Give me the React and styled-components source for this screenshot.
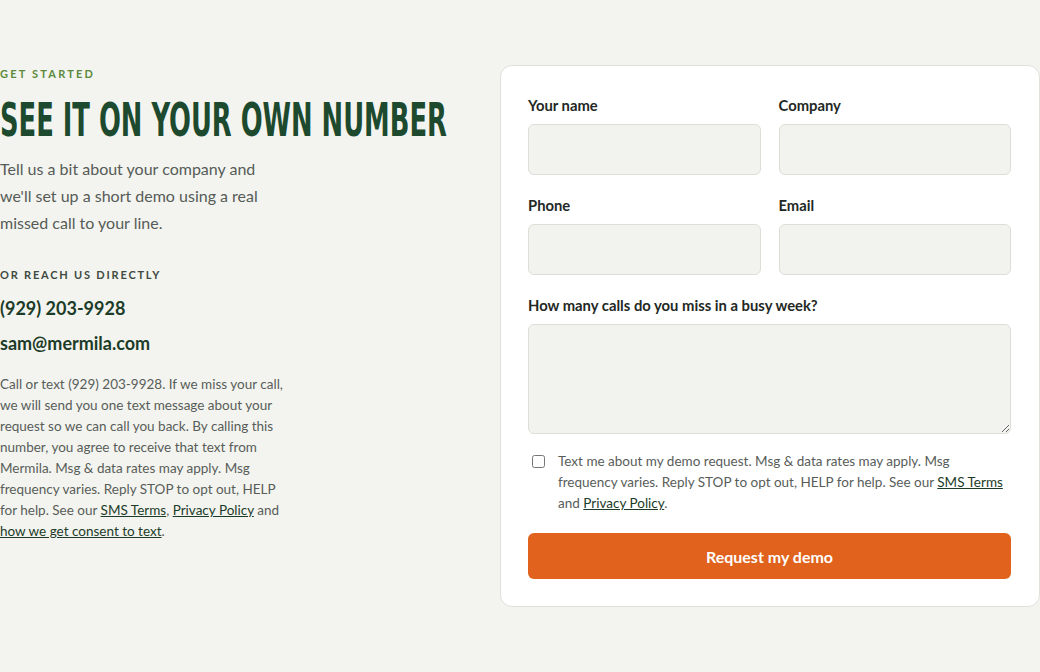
import React from "react";
import styled, { createGlobalStyle } from "styled-components";

const GlobalStyle = createGlobalStyle`
  html, body {
    margin: 0;
    padding: 0;
    background: #f3f4ef;
  }
  body {
    font-family: Lato, "Noto Sans", sans-serif;
    color: #2a2f2b;
  }
  * { box-sizing: border-box; }
`;

const Page = styled.div`
  display: grid;
  grid-template-columns: 500px 540px;
  align-items: start;
  padding-top: 65px;
  min-height: 672px;
`;

const Intro = styled.div`
  display: flex;
  flex-direction: column;
  align-items: flex-start;
  padding-top: 2px;
`;

const Eyebrow = styled.div`
  font-size: 11px;
  font-weight: 700;
  letter-spacing: ${(p) => p.$spacing || 2.2}px;
  text-transform: uppercase;
  color: ${(p) => p.$color || "#5b8a3c"};
  line-height: 14px;
`;

const Heading = styled.h1`
  margin: 14px 0 0;
  height: 50px;
  font-family: "DejaVu Sans Condensed", "DejaVu Sans", sans-serif;
  font-stretch: condensed;
  font-weight: 700;
  font-size: 46px;
  line-height: 50px;
  color: #1d4a2e;
  white-space: nowrap;
  transform: scaleX(0.623);
  transform-origin: left center;
`;

const Lead = styled.p`
  margin: 10px 0 0;
  font-size: 16px;
  line-height: 27px;
  color: #565b57;
  max-width: 270px;
`;

const ContactBlock = styled.div`
  margin-top: 32px;
  display: flex;
  flex-direction: column;
`;

const ContactLine = styled.a`
  display: block;
  margin-top: ${(p) => p.$top || 12}px;
  font-size: 18px;
  font-weight: 700;
  line-height: 23px;
  color: #1c3b28;
  text-decoration: none;
`;

const Fine = styled.p`
  margin: 19px 0 0;
  font-size: 13.5px;
  line-height: 21px;
  color: #585d59;
  max-width: 290px;
`;

const Link = styled.a`
  color: #1c3b28;
  text-decoration: underline;
`;

const Card = styled.form`
  background: #ffffff;
  border: 1px solid #dfe1da;
  border-radius: 12px;
  padding: 29px 28px 27px 27px;
  display: flex;
  flex-direction: column;
`;

const Grid = styled.div`
  display: grid;
  grid-template-columns: 1fr 1fr;
  column-gap: 18px;
  row-gap: 20px;
`;

const Field = styled.label`
  display: flex;
  flex-direction: column;
  gap: 9px;
  margin-top: ${(p) => p.$top || 0}px;
`;

const LabelText = styled.span`
  font-size: 14.8px;
  font-weight: 700;
  line-height: 20px;
  color: #232824;
`;

const Input = styled.input`
  height: 51px;
  border: 1px solid #dcdfd6;
  border-radius: 6px;
  background: #f2f3ee;
  font: inherit;
  padding: 0 12px;
  outline: none;
`;

const Area = styled.textarea`
  height: 110px;
  border: 1px solid #dcdfd6;
  border-radius: 6px;
  background: #f2f3ee;
  font: inherit;
  padding: 10px 12px;
  resize: vertical;
  outline: none;
`;

const Consent = styled.label`
  display: flex;
  align-items: flex-start;
  gap: 13px;
  margin-top: 17px;
  padding-left: 4px;
`;

const Check = styled.input`
  margin: 4px 0 0;
  width: 13px;
  height: 13px;
  flex-shrink: 0;
`;

const ConsentText = styled.span`
  max-width: 450px;
  font-size: 13.5px;
  line-height: 21px;
  color: #585d59;
`;

const Submit = styled.button`
  margin-top: 19px;
  height: 46px;
  border: none;
  border-radius: 6px;
  background: #e0621c;
  color: #ffffff;
  font-family: inherit;
  font-size: 16px;
  font-weight: 700;
  cursor: pointer;
`;

export default function App() {
  return (
    <>
      <GlobalStyle />
      <Page>
        <Intro>
          <Eyebrow>Get started</Eyebrow>
          <Heading>SEE IT ON YOUR OWN NUMBER</Heading>
          <Lead>
            Tell us a bit about your company and we'll set up a short demo
            using a real missed call to your line.
          </Lead>
          <ContactBlock>
            <Eyebrow $color="#3e4a41" $spacing={1.8}>
              Or reach us directly
            </Eyebrow>
            <ContactLine href="#" $top={15}>
              (929) 203-9928
            </ContactLine>
            <ContactLine href="#" $top={12}>
              sam@mermila.com
            </ContactLine>
          </ContactBlock>
          <Fine>
            Call or text (929) 203-9928. If we miss your call, we will send you
            one text message about your request so we can call you back. By
            calling this number, you agree to receive that text from Mermila.
            Msg &amp; data rates may apply. Msg frequency varies. Reply STOP to
            opt out, HELP for help. See our <Link href="#">SMS Terms</Link>,{" "}
            <Link href="#">Privacy Policy</Link> and{" "}
            <Link href="#">how we get consent to text</Link>.
          </Fine>
        </Intro>

        <Card onSubmit={(e) => e.preventDefault()}>
          <Grid>
            <Field>
              <LabelText>Your name</LabelText>
              <Input type="text" />
            </Field>
            <Field>
              <LabelText>Company</LabelText>
              <Input type="text" />
            </Field>
            <Field>
              <LabelText>Phone</LabelText>
              <Input type="tel" />
            </Field>
            <Field>
              <LabelText>Email</LabelText>
              <Input type="email" />
            </Field>
          </Grid>
          <Field $top={20}>
            <LabelText>How many calls do you miss in a busy week?</LabelText>
            <Area />
          </Field>
          <Consent>
            <Check type="checkbox" />
            <ConsentText>
              Text me about my demo request. Msg &amp; data rates may apply. Msg
              frequency varies. Reply STOP to opt out, HELP for help. See our{" "}
              <Link href="#">SMS Terms</Link> and{" "}
              <Link href="#">Privacy Policy</Link>.
            </ConsentText>
          </Consent>
          <Submit type="submit">Request my demo</Submit>
        </Card>
      </Page>
    </>
  );
}
